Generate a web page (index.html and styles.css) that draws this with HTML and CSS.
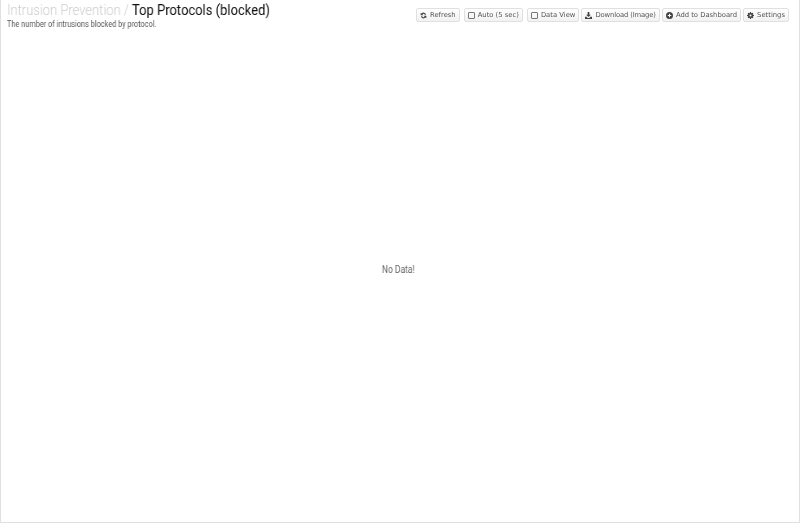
FILE: index.html
```html
<!DOCTYPE html>
<html lang="en">
<head>
    <meta charset="UTF-8">
    <title>Top Protocols (blocked)</title>
    <link rel="stylesheet" href="styles.css">
</head>
<body>
    <div class="report">
        <div class="report-header">
            <div class="report-title">
                <h1><span class="category">Intrusion Prevention /</span> Top Protocols (blocked)</h1>
                <p>The number of intrusions blocked by protocol.</p>
            </div>
            <div class="toolbar">
                <button class="tool-button">
                    <svg viewBox="0 0 16 16"><path d="M14 6.500A6.200 6.200 0 0 0 3.500 3.300L1.500 1.500V7.500H7.500L5.500 5.400A3.400 3.400 0 0 1 11 6.500zM2 9.500a6.200 6.200 0 0 0 10.500 3.200l2 1.800V8.500H8.500l2 2.100A3.400 3.400 0 0 1 5 9.500z"/></svg>
                    Refresh
                </button>
                <button class="tool-button gap-left">
                    <span class="check"></span>
                    Auto (5 sec)
                </button>
                <button class="tool-button gap-left">
                    <span class="check"></span>
                    Data View
                </button>
                <button class="tool-button tight">
                    <svg viewBox="0 0 16 16"><path d="M6 0h4v6h3.500L8 11.500 2.500 6H6zM0 11h3.500L6 13.500h4L12.500 11H16v5H0z"/></svg>
                    Download (Image)
                </button>
                <button class="tool-button">
                    <svg viewBox="0 0 16 16"><path fill-rule="evenodd" d="M8 0a8 8 0 1 0 0 16A8 8 0 0 0 8 0zM6.800 4h2.400v2.800H12v2.400H9.200V12H6.800V9.200H4V6.800h2.800z"/></svg>
                    Add to Dashboard
                </button>
                <button class="tool-button">
                    <svg viewBox="0 0 16 16"><path fill-rule="evenodd" d="M6.800 0h2.400l.4 2.200 1.300.6 1.900-1.300 1.700 1.700-1.300 1.900.6 1.300 2.200.4v2.400l-2.200.4-.6 1.300 1.300 1.900-1.700 1.700-1.900-1.300-1.300.6-.4 2.200H6.800l-.4-2.200-1.300-.6-1.900 1.300-1.700-1.700 1.300-1.900-.6-1.300L0 9.200V6.800l2.200-.4.6-1.300-1.300-1.900 1.700-1.700 1.900 1.300 1.300-.6zM8 5.600a2.400 2.400 0 1 0 0 4.800 2.400 2.400 0 0 0 0-4.800z"/></svg>
                    Settings
                </button>
            </div>
        </div>
        <div class="report-body">
            <span class="no-data">No Data!</span>
        </div>
    </div>
</body>
</html>
```

FILE: styles.css
```css
html, body {
    height: 100%;
}
body {
    margin: 0;
    background-color: #fff;
    font-family: Roboto, sans-serif;
    color: #555;
}
.report {
    box-sizing: border-box;
    height: 523px;
    display: flex;
    flex-direction: column;
    border: 1px solid #e0e0e0;
    border-top: none;
}
.report-header {
    display: flex;
    justify-content: space-between;
    padding: 0 10px 0 6px;
}
.report-title h1 {
    margin: 0;
    font-size: 15px;
    line-height: 20px;
    font-weight: 400;
    color: #111;
    white-space: nowrap;
    transform: scaleX(0.865);
    transform-origin: left;
    will-change: transform;
}
.report-title .category {
    color: #ccc;
    font-weight: 300;
}
.report-title p {
    margin: 0;
    font-size: 9px;
    line-height: 8px;
    color: #555;
    white-space: nowrap;
    transform: scaleX(0.815);
    transform-origin: left;
    will-change: transform;
}
.toolbar {
    display: flex;
    align-items: flex-start;
    gap: 2px;
    padding-top: 8px;
    will-change: transform;
}
.tool-button {
    display: flex;
    align-items: center;
    gap: 3px;
    height: 14px;
    padding: 0 3px;
    border: 1px solid #e0e0e0;
    border-radius: 2px;
    background: linear-gradient(#fff, #f2f2f2);
    font-family: "DejaVu Sans", sans-serif;
    font-size: 6.800px;
    color: #555;
    white-space: nowrap;
}
.tool-button svg {
    width: 7px;
    height: 7px;
    fill: #444;
}
.tight {
    letter-spacing: -0.13px;
}
.gap-left {
    margin-left: 2px;
}
.check {
    box-sizing: border-box;
    width: 7px;
    height: 7px;
    border: 1px solid #777;
    border-radius: 1px;
}
.report-body {
    flex: 1;
    display: flex;
    align-items: center;
    justify-content: center;
    padding: 0 3px 12px 0;
}
.no-data {
    font-size: 10px;
    color: #666;
    transform: scaleX(0.85);
    will-change: transform;
}
```
